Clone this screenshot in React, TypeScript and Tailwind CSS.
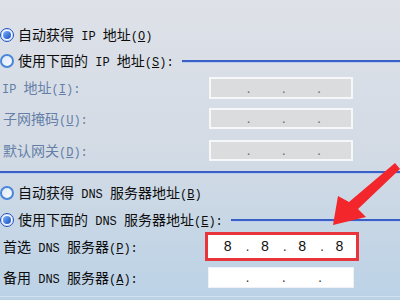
import React from "react";

const M = ({ children }: { children?: any }) => (
  <span className="font-['Liberation_Mono'] text-[12px]">{children}</span>
);

const Radio = ({ checked }: { checked?: boolean }) =>
  checked ? (
    <span className="w-[14px] h-[14px] shrink-0 rounded-full border border-[#1d50c0] bg-white flex items-center justify-center shadow-[inset_0_0_0_1px_#cfe0fa]">
      <span className="w-[8px] h-[8px] rounded-full bg-linear-to-br from-[#7fb4fa] to-[#1648c2]" />
    </span>
  ) : (
    <span className="w-[14px] h-[14px] shrink-0 rounded-full border-2 border-[#4a86d8] bg-linear-to-br from-[#dfe9f8] to-[#f7faff]" />
  );

const BlueLine = ({ className }: { className?: string }) => (
  <div className={"h-[2px] bg-[#3a5fc6] shadow-[0_1px_0_#b9cbef] " + (className || "")} />
);

interface IpBoxProps {
  values?: string[];
  disabled?: boolean;
}

const IpBox = ({ values = ["", "", "", ""], disabled }: IpBoxProps) => (
  <div className="flex w-full h-full items-center pl-[3px] font-['Liberation_Mono'] text-[14px]">
    {values.map((v, i) => (
      <React.Fragment key={i}>
        <span className="flex-1 text-center text-[#111]">{v}</span>
        {i < 3 && (
          <span className={"w-[4px] text-center text-[11px] pt-[4px] " + (disabled ? "text-[#6b6b6b]" : "text-[#333]")}>.</span>
        )}
      </React.Fragment>
    ))}
  </div>
);

const App = () => {
  return (
    <div className="relative w-[400px] h-[300px] overflow-hidden bg-linear-to-b from-[#dee1e8] via-[#d3dbe5] to-[#bbd2e6] font-['Noto_Sans_CJK_SC',sans-serif] text-[14px] leading-none text-[#0d0d0d]">
      <div className="pt-[26px]">
        <div className="h-[18px] flex items-center">
          <Radio checked />
          <span className="ml-[4px]">自动获得<M> IP </M>地址<M>(<u>O</u>)</M></span>
        </div>
        <div className="h-[33px] flex items-center">
          <Radio />
          <span className="ml-[4px]">使用下面的<M> IP </M>地址<M>(<u>S</u>):</M></span>
          <BlueLine className="flex-1 ml-[8px]" />
        </div>
        <div className="h-[22px] flex items-center text-[#6580a8]">
          <span className="w-[209px] pl-[2px]"><M>IP </M>地址<M>(<u>I</u>):</M></span>
          <div className="w-[144px] h-[22px] bg-[#dadcde] border-2 border-[#f5f7f9]">
            <IpBox disabled />
          </div>
        </div>
        <div className="mt-[9px] h-[21px] flex items-center text-[#6580a8]">
          <span className="w-[209px] pl-[3px]">子网掩码<M>(<u>U</u>):</M></span>
          <div className="w-[144px] h-[21px] bg-[#dadcde] border-2 border-[#f5f7f9]">
            <IpBox disabled />
          </div>
        </div>
        <div className="mt-[11px] h-[21px] flex items-center text-[#6580a8]">
          <span className="w-[209px] pl-[3px]">默认网关<M>(<u>D</u>):</M></span>
          <div className="w-[144px] h-[21px] bg-[#dadcde] border-2 border-[#f5f7f9]">
            <IpBox disabled />
          </div>
        </div>
        <BlueLine className="mt-[10px]" />
        <div className="mt-[11px] h-[18px] flex items-center">
          <Radio />
          <span className="ml-[4px]">自动获得<M> DNS </M>服务器地址<M>(<u>B</u>)</M></span>
        </div>
        <div className="mt-[7px] h-[21px] flex items-center">
          <Radio checked />
          <span className="ml-[4px]">使用下面的<M> DNS </M>服务器地址<M>(<u>E</u>):</M></span>
          <BlueLine className="flex-1 ml-[8px]" />
        </div>
        <div className="mt-[2px] h-[29px] flex items-center">
          <span className="w-[205px] pl-[3px]">首选<M> DNS </M>服务器<M>(<u>P</u>):</M></span>
          <div className="w-[154px] h-[29px] border-[3px] border-[#e8343a] bg-white">
            <IpBox values={["8", "8", "8", "8"]} />
          </div>
        </div>
        <div className="mt-[6px] h-[21px] flex items-center">
          <span className="w-[208px] pl-[3px]">备用<M> DNS </M>服务器<M>(<u>A</u>):</M></span>
          <div className="w-[146px] h-[21px] bg-white border border-[#eef2f6]">
            <IpBox />
          </div>
        </div>
        <div className="mt-[8px] h-px bg-[#d3e2f0]" />
      </div>
      <svg className="absolute inset-0 pointer-events-none" width="400" height="300" viewBox="0 0 400 300">
        <polygon
          points="333,225 338,196 349,202 395,163 400,169 358,209 366,217"
          fill="#f2262b"
        />
      </svg>
    </div>
  );
};

export default App;
